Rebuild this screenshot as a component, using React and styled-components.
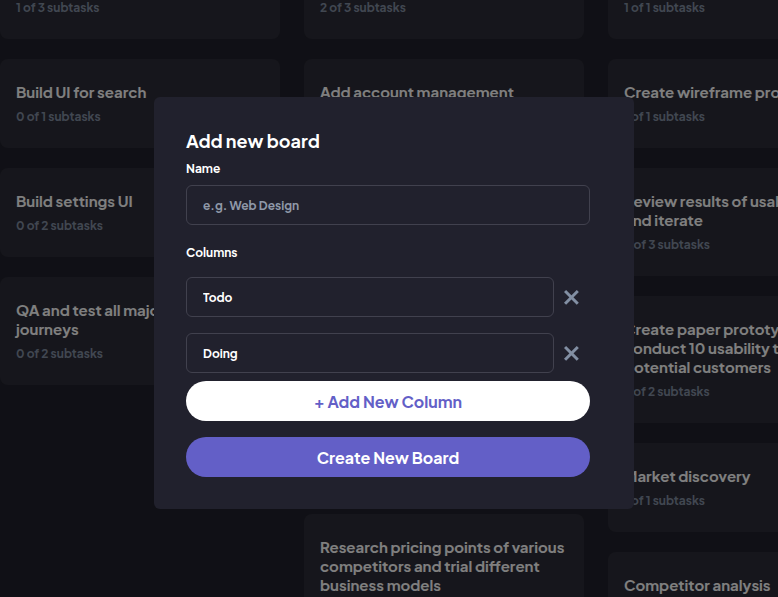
import React, { useState } from "react";
import styled, { createGlobalStyle, css } from "styled-components";

const GlobalStyle = createGlobalStyle`
  *, *::before, *::after { box-sizing: border-box; }
  body {
    margin: 0;
    overflow: hidden;
    background: #20212c;
    font-family: "Plus Jakarta Sans", Inter, sans-serif;
  }
  button, input { font-family: inherit; }
`;

const Board = styled.main`
  display: flex;
  align-items: flex-start;
  gap: 24px;
  height: 100vh;
  overflow: hidden;
`;

const Column = styled.ul`
  flex: 0 0 280px;
  display: grid;
  gap: 20px;
  margin: 0;
  padding: 0;
  list-style: none;
`;

const Card = styled.li`
  display: grid;
  gap: 8px;
  padding: 23px 16px;
  border-radius: 8px;
  background: #2d2d38;
  ${({ $continued }) =>
    $continued &&
    css`
      padding-top: 0;
      border-top-left-radius: 0;
      border-top-right-radius: 0;
    `}
`;

const CardTitle = styled.h3`
  margin: 0;
  color: #fff;
  font-size: 15px;
  font-weight: 700;
  line-height: 19px;
`;

const CardMeta = styled.p`
  margin: 0;
  color: #828fa3;
  font-size: 12px;
  font-weight: 700;
  line-height: 16px;
`;

const Overlay = styled.div`
  position: fixed;
  inset: 0;
  display: flex;
  align-items: center;
  justify-content: center;
  padding: 9px 0 0 10px;
  background: rgba(0, 0, 0, 0.5);
`;

const Dialog = styled.form`
  width: 480px;
  max-width: 100%;
  padding: 32px 44px 32px 32px;
  border-radius: 6px;
  background: #21212d;
  color: #fff;
`;

const DialogTitle = styled.h2`
  margin: 0 0 8px;
  font-size: 18px;
  font-weight: 700;
  line-height: 24px;
`;

const Field = styled.div`
  display: grid;
  gap: 8px;
  margin-bottom: 20px;
`;

const labelText = css`
  padding: 0;
  font-size: 12px;
  font-weight: 700;
  line-height: 16px;
`;

const Label = styled.label`
  ${labelText}
`;

const Columns = styled.fieldset`
  display: grid;
  gap: 16px;
  min-width: 0;
  margin: 0 0 8px;
  padding: 0;
  border: 0;
`;

const Legend = styled.legend`
  ${labelText}
  margin-bottom: 16px;
`;

const TextInput = styled.input`
  flex: 1;
  width: 100%;
  min-width: 0;
  height: 40px;
  padding: 0 16px;
  border: 1px solid #41414e;
  border-radius: 6px;
  outline: none;
  background: transparent;
  color: #fff;
  font-size: 12px;
  font-weight: 700;

  &::placeholder {
    color: #8f98a8;
    opacity: 1;
  }
`;

const ColumnRow = styled.div`
  display: flex;
  align-items: center;
`;

const RemoveButton = styled.button`
  display: flex;
  align-items: center;
  width: 36px;
  height: 40px;
  padding: 0 10px;
  border: 0;
  background: none;
  color: #828fa3;
  cursor: pointer;

  svg { flex: none; }
`;

const PillButton = styled.button`
  display: block;
  width: 100%;
  height: 40px;
  padding: 0 16px;
  border: 0;
  border-radius: 20px;
  background: ${({ $primary }) => ($primary ? "#635fc7" : "#fff")};
  color: ${({ $primary }) => ($primary ? "#fff" : "#635fc7")};
  font-size: 16px;
  font-weight: 700;
  cursor: pointer;
`;

const Actions = styled.div`
  display: grid;
  gap: 16px;
`;

const CrossIcon = () => (
  <svg width="15" height="15" viewBox="0 0 15 15" fill="currentColor" aria-hidden="true">
    <path d="m12.728 0 2.122 2.122L2.122 14.85 0 12.728z" />
    <path d="M0 2.122 2.122 0 14.85 12.728l-2.122 2.122z" />
  </svg>
);

const columns = [
  [
    { meta: "1 of 3 subtasks" },
    { title: "Build UI for search", meta: "0 of 1 subtasks" },
    { title: "Build settings UI", meta: "0 of 2 subtasks" },
    { title: "QA and test all major user journeys", meta: "0 of 2 subtasks" },
  ],
  [
    { meta: "2 of 3 subtasks" },
    { title: "Add account management endpoints", meta: "2 of 3 subtasks" },
    { title: "Design onboarding flow", meta: "1 of 3 subtasks" },
    { title: "Add search endpoints", meta: "1 of 2 subtasks" },
    { title: "Add authentication endpoints", meta: "1 of 2 subtasks" },
    {
      title: "Research pricing points of various competitors and trial different business models",
      meta: "1 of 3 subtasks",
    },
  ],
  [
    { meta: "1 of 1 subtasks" },
    { title: "Create wireframe prototype", meta: "1 of 1 subtasks" },
    { title: "Review results of usability tests and iterate", meta: "3 of 3 subtasks" },
    {
      title: "Create paper prototypes and conduct 10 usability tests with potential customers",
      meta: "2 of 2 subtasks",
    },
    { title: "Market discovery", meta: "1 of 1 subtasks" },
    { title: "Competitor analysis", meta: "2 of 2 subtasks" },
  ],
];

export default function App() {
  const [name, setName] = useState("");
  const [boardColumns, setBoardColumns] = useState([
    { id: 1, name: "Todo" },
    { id: 2, name: "Doing" },
  ]);

  const rename = (id, value) =>
    setBoardColumns((list) => list.map((c) => (c.id === id ? { ...c, name: value } : c)));
  const remove = (id) => setBoardColumns((list) => list.filter((c) => c.id !== id));
  const add = () => setBoardColumns((list) => [...list, { id: Date.now(), name: "" }]);

  return (
    <>
      <GlobalStyle />
      <Board>
        {columns.map((cards, i) => (
          <Column key={i}>
            {cards.map((card, j) => (
              <Card key={j} $continued={!card.title}>
                {card.title && <CardTitle>{card.title}</CardTitle>}
                <CardMeta>{card.meta}</CardMeta>
              </Card>
            ))}
          </Column>
        ))}
      </Board>
      <Overlay>
        <Dialog
          role="dialog"
          aria-modal="true"
          aria-labelledby="dialog-title"
          onSubmit={(e) => e.preventDefault()}
        >
          <DialogTitle id="dialog-title">Add new board</DialogTitle>
          <Field>
            <Label htmlFor="board-name">Name</Label>
            <TextInput
              id="board-name"
              placeholder="e.g. Web Design"
              value={name}
              onChange={(e) => setName(e.target.value)}
            />
          </Field>
          <Columns>
            <Legend>Columns</Legend>
            {boardColumns.map((c) => (
              <ColumnRow key={c.id}>
                <TextInput
                  aria-label="Column name"
                  value={c.name}
                  onChange={(e) => rename(c.id, e.target.value)}
                />
                <RemoveButton type="button" aria-label="Remove column" onClick={() => remove(c.id)}>
                  <CrossIcon />
                </RemoveButton>
              </ColumnRow>
            ))}
          </Columns>
          <Actions>
            <PillButton type="button" onClick={add}>+ Add New Column</PillButton>
            <PillButton type="submit" $primary>Create New Board</PillButton>
          </Actions>
        </Dialog>
      </Overlay>
    </>
  );
}
